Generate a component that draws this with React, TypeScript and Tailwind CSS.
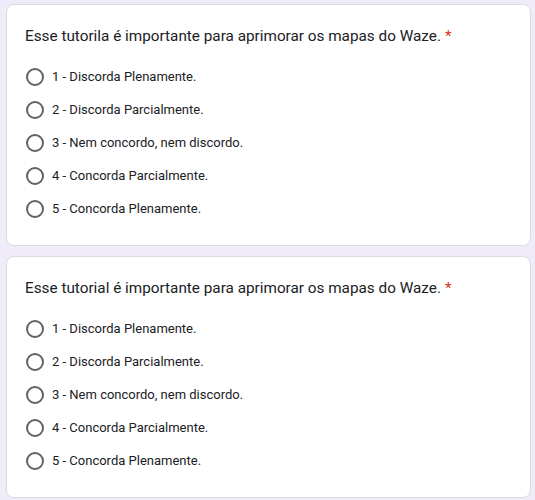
import React from "react";

const options = [
  "1 - Discorda Plenamente.",
  "2 - Discorda Parcialmente.",
  "3 - Nem concordo, nem discordo.",
  "4 - Concorda Parcialmente.",
  "5 - Concorda Plenamente.",
];

function Card({ title }: { title: string }) {
  return (
    <div className="bg-white border border-[#dadce0] rounded-[8px] pl-[18px] pr-4 pt-[19px] pb-[20px]">
      <div className="text-[15.3px] leading-[24px] text-[#202124]">
        {title}
        <span className="text-[#d93025] ml-[4px]">*</span>
      </div>
      <div className="mt-[12px] flex flex-col">
        {options.map((o) => (
          <div key={o} className="h-[33px] flex items-center">
            <div className="w-[18px] h-[18px] rounded-full border-2 border-[#5f6368] ml-[1px]" />
            <span className="ml-[8px] text-[13px] text-[#202124]">{o}</span>
          </div>
        ))}
      </div>
    </div>
  );
}

export default function App() {
  return (
    <div
      className="w-[535px] h-[500px] bg-[#f0ebf8] pt-[4px] pl-[6px] pr-[4px] flex flex-col gap-[10px]"
      style={{ fontFamily: "Roboto, 'Liberation Sans', sans-serif" }}
    >
      <Card title="Esse tutorila é importante para aprimorar os mapas do Waze." />
      <Card title="Esse tutorial é importante para aprimorar os mapas do Waze." />
    </div>
  );
}
